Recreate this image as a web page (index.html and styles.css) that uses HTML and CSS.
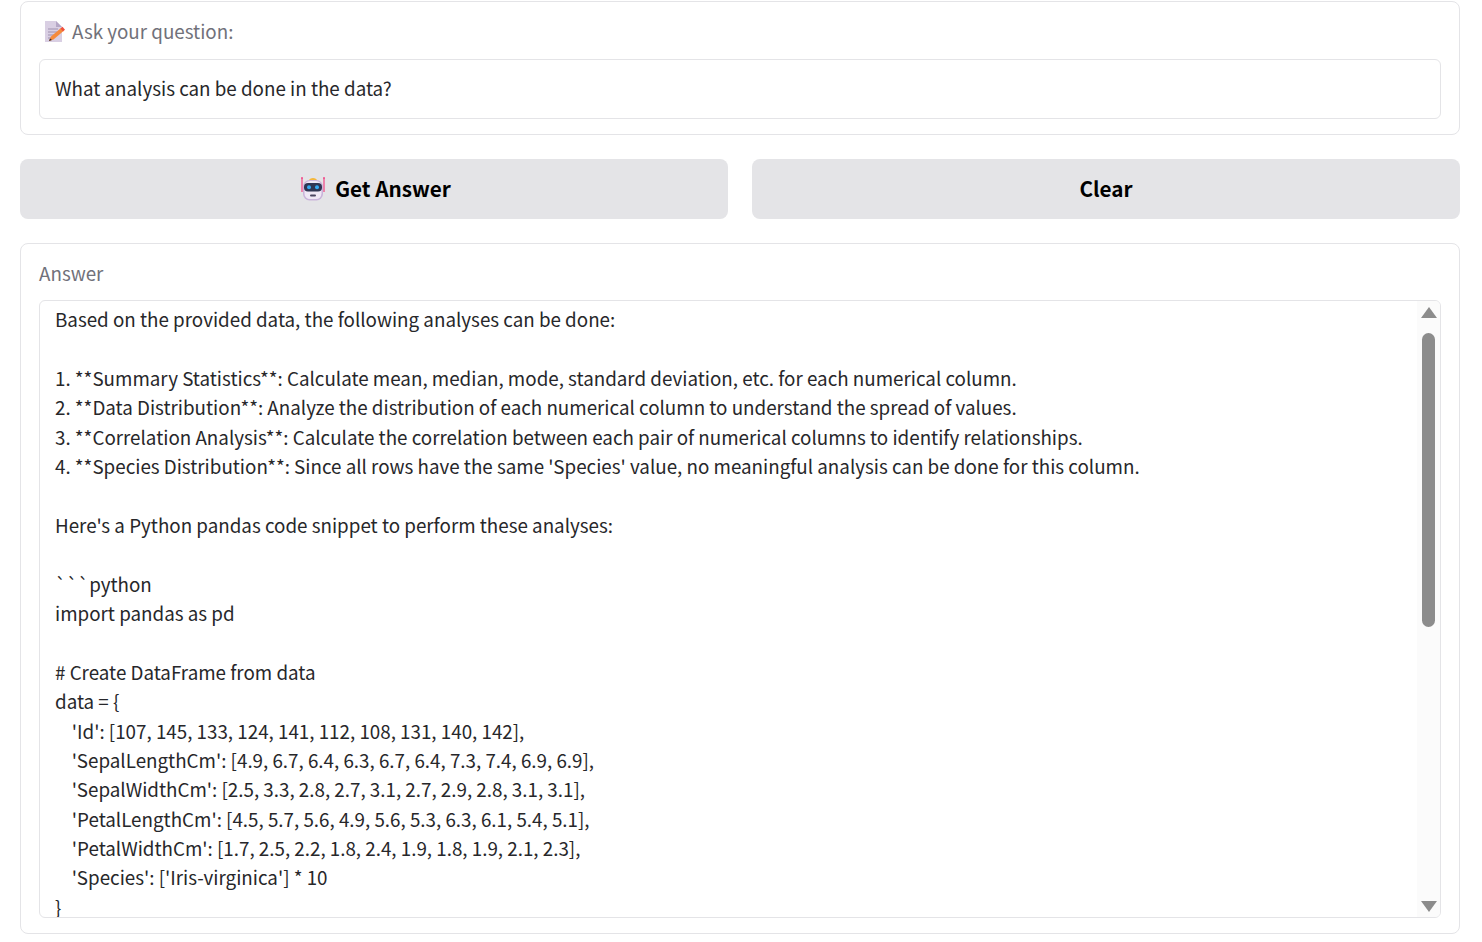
FILE: index.html
```html
<!DOCTYPE html>
<html lang="en">
<head>
<meta charset="utf-8">
<title>Ask your question</title>
<link rel="stylesheet" href="styles.css">
</head>
<body>
<main class="page">
  <section class="card card-question">
    <label class="label label-question">
      <svg class="memo" viewBox="0 0 20 22" width="20" height="22" aria-hidden="true">
        <path d="M0 1h11l6 6v15H0z" fill="#d9cfe3"/>
        <path d="M11 1l6 6h-6z" fill="#b5a7c6"/>
        <path d="M3 9h10M3 12h9M3 15h6M3 18h4" stroke="#a092b0" stroke-width="1.2"/>
        <path d="M4 21l2-4.500 10-8.500 2.500 3-10 8.500z" fill="#f58a3c"/>
        <path d="M15.500 8.500l2-1.700 2.500 3-2 1.700z" fill="#f0503c"/>
        <path d="M4 21l1-2.500 2 1.500z" fill="#3a2a2a"/>
      </svg>
      <span>Ask your question:</span>
    </label>
    <div class="input">What analysis can be done in the data?</div>
  </section>

  <div class="actions">
    <button class="btn btn-icon" type="button">
      <svg class="robot" viewBox="0 0 24 24" width="24" height="24" aria-hidden="true">
        <path d="M1 1v14M23 1v14" stroke="#f0508c" stroke-width="1.300"/>
        <circle cx="1" cy="1" r="1" fill="#f0508c"/>
        <circle cx="23" cy="1" r="1" fill="#f0508c"/>
        <path d="M8 3.500c0-3.500 8-3.500 8 0z" fill="#f5b83c"/>
        <rect x="2" y="3" width="20" height="20.500" rx="6.500" fill="#c9b3da"/>
        <rect x="3.500" y="4" width="17" height="18" rx="5.500" fill="#efe7f5"/>
        <rect x="3" y="6" width="18" height="8.500" rx="4" fill="#2f3552"/>
        <circle cx="8" cy="10.200" r="2" fill="#35a8f0"/>
        <circle cx="16" cy="10.200" r="2" fill="#35a8f0"/>
        <rect x="9" y="17.500" width="6" height="2" rx="1" fill="#4a4560"/>
      </svg>
      <span>Get Answer</span>
    </button>
    <button class="btn" type="button"><span>Clear</span></button>
  </div>

  <section class="card card-answer">
    <div class="label label-answer">Answer</div>
    <div class="output">
      <div class="output-text">Based on the provided data, the following analyses can be done:

1. **Summary Statistics**: Calculate mean, median, mode, standard deviation, etc. for each numerical column.
2. **Data Distribution**: Analyze the distribution of each numerical column to understand the spread of values.
3. **Correlation Analysis**: Calculate the correlation between each pair of numerical columns to identify relationships.
4. **Species Distribution**: Since all rows have the same 'Species' value, no meaningful analysis can be done for this column.

Here's a Python pandas code snippet to perform these analyses:

```python
import pandas as pd

# Create DataFrame from data
data = {
    'Id': [107, 145, 133, 124, 141, 112, 108, 131, 140, 142],
    'SepalLengthCm': [4.9, 6.7, 6.4, 6.3, 6.7, 6.4, 7.3, 7.4, 6.9, 6.9],
    'SepalWidthCm': [2.5, 3.3, 2.8, 2.7, 3.1, 2.7, 2.9, 2.8, 3.1, 3.1],
    'PetalLengthCm': [4.5, 5.7, 5.6, 4.9, 5.6, 5.3, 6.3, 6.1, 5.4, 5.1],
    'PetalWidthCm': [1.7, 2.5, 2.2, 1.8, 2.4, 1.9, 1.8, 1.9, 2.1, 2.3],
    'Species': ['Iris-virginica'] * 10
}</div>
      <div class="scrollbar" aria-hidden="true">
        <span class="arrow arrow-up"></span>
        <span class="track"><span class="thumb"></span></span>
        <span class="arrow arrow-down"></span>
      </div>
    </div>
  </section>
</main>
</body>
</html>
```

FILE: styles.css
```css
* { box-sizing: border-box; }

html, body {
  margin: 0;
  height: 100%;
  overflow: hidden;
  background: #fff;
}

body {
  font-family: "Noto Sans CJK SC", "Noto Sans", sans-serif;
  font-size: 18.8px;
  color: #27272a;
}

.page {
  display: flex;
  flex-direction: column;
  gap: 24px;
  padding: 1px 22px 0 20px;
}

.card {
  border: 1px solid #e4e4e7;
  border-radius: 8px;
  background: #fff;
  padding: 0 18px;
}

.card-question { height: 134px; }
.card-answer { height: 691px; }

.label {
  color: #71717a;
  display: flex;
  align-items: center;
}

.label-question {
  height: 57px;
  padding: 0 0 0 6px;
  gap: 7px;
}

.label-answer {
  height: 56px;
}

.memo { flex: none; }

.input {
  height: 60px;
  border: 1px solid #e4e4e7;
  border-radius: 6px;
  padding: 0 15px 2px;
  display: flex;
  align-items: center;
  line-height: 29.4px;
}

.actions {
  display: grid;
  grid-template-columns: 1fr 1fr;
  gap: 24px;
}

.btn {
  height: 60px;
  border: 0;
  border-radius: 8px;
  background: #e4e4e7;
  color: #000;
  font: 600 20.7px "Noto Sans CJK SC", "Noto Sans", sans-serif;
  display: flex;
  align-items: center;
  justify-content: center;
  gap: 10px;
  padding: 0 0 2px;
}

.btn-icon { padding-left: 4px; }

.robot { flex: none; margin-top: 2px; }

.output {
  height: 618px;
  border: 1px solid #e4e4e7;
  border-radius: 6px;
  display: flex;
  overflow: hidden;
}

.output-text {
  flex: 1;
  min-width: 0;
  padding: 3.3px 15px 0;
  white-space: pre-wrap;
  line-height: 29.375px;
  overflow: hidden;
}

.scrollbar {
  flex: none;
  width: 23px;
  background: #fbfbfb;
  display: flex;
  flex-direction: column;
  align-items: center;
  padding: 6px 0 5px;
}

.track {
  flex: 1;
  width: 13px;
  padding-top: 15px;
}

.thumb {
  display: block;
  height: 294px;
  border-radius: 7px;
  background: #8c8c8c;
}

.arrow {
  flex: none;
  width: 0;
  height: 0;
  border-left: 8px solid transparent;
  border-right: 8px solid transparent;
}

.arrow-up { border-bottom: 11px solid #8c8c8c; }
.arrow-down { border-top: 11px solid #8c8c8c; }
```
